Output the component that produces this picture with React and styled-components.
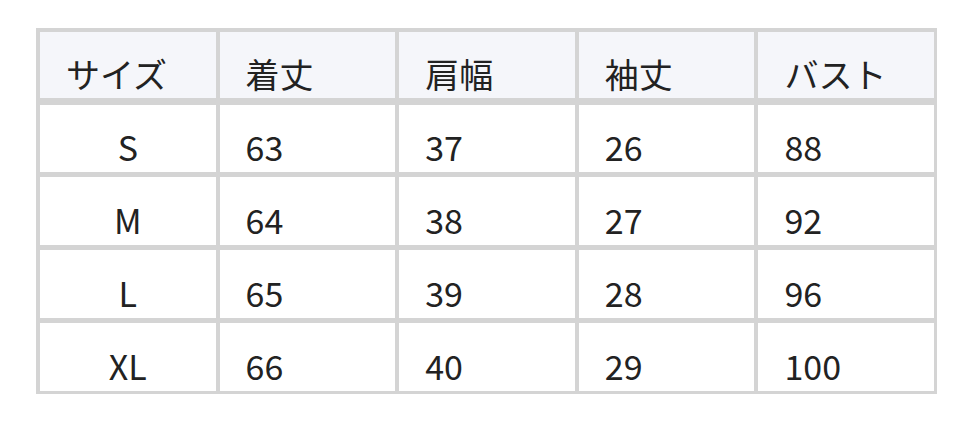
import React from 'react';
import styled, { createGlobalStyle } from 'styled-components';

const GlobalStyle = createGlobalStyle`
  body {
    margin: 0;
    background: #fff;
    font-family: 'Noto Sans CJK JP', 'Noto Sans', sans-serif;
  }
`;

const Page = styled.div`
  padding: 28px 35px 0 36px;
`;

const Table = styled.div`
  width: 901px;
  box-sizing: border-box;
  display: grid;
  grid-template-columns: repeat(5, 1fr);
  grid-template-rows: 67px repeat(4, 68px);
  column-gap: 4px;
  row-gap: 5px;
  padding: 4px 3px 3px 4px;
  background: #d4d4d4;
`;

const HeadCell = styled.div`
  background: #f5f6fa;
  color: #222;
  font-size: 34px;
  line-height: 1;
  display: flex;
  align-items: flex-end;
  padding: 0 0 7px 26px;
  margin-bottom: 1px;
`;

const Cell = styled.div`
  background: #fff;
  color: #222;
  font-size: 34px;
  line-height: 1;
  display: flex;
  align-items: flex-end;
  justify-content: ${(p) => (p.$center ? 'center' : 'flex-start')};
  padding: ${(p) => (p.$center ? '0 0 8px 0' : '0 0 8px 26px')};
  margin-top: ${(p) => (p.$first ? '1px' : '0')};
`;

const headers = ['サイズ', '着丈', '肩幅', '袖丈', 'バスト'];
const rows = [
  ['S', '63', '37', '26', '88'],
  ['M', '64', '38', '27', '92'],
  ['L', '65', '39', '28', '96'],
  ['XL', '66', '40', '29', '100'],
];

export default function App() {
  return (
    <Page>
      <GlobalStyle />
      <Table>
        {headers.map((h) => (
          <HeadCell key={h}>{h}</HeadCell>
        ))}
        {rows.map((row, i) =>
          row.map((v, j) => (
            <Cell key={`${i}-${j}`} $center={j === 0} $first={i === 0}>
              {v}
            </Cell>
          ))
        )}
      </Table>
    </Page>
  );
}
